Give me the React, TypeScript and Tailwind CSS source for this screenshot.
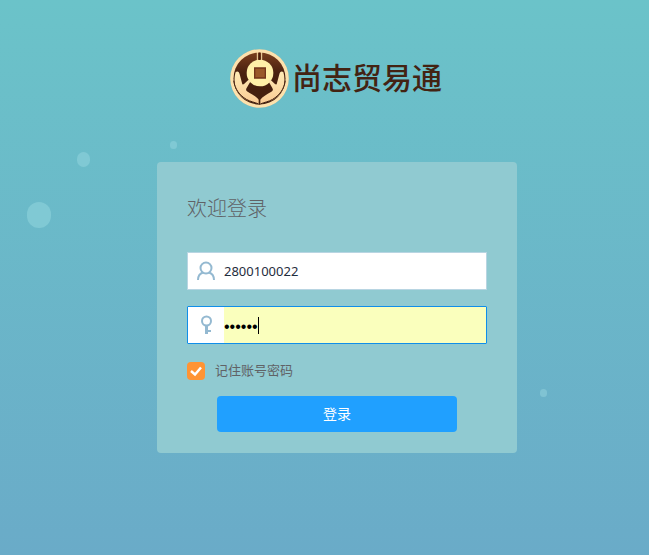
import { useState } from "react"

function Logo() {
  return (
    <svg className="h-[59px] w-[59px] shrink-0" viewBox="30 27 177 177" aria-hidden="true">
      <defs>
        <radialGradient id="gold" cx="50%" cy="50%" r="52%">
          <stop offset="0.7" stopColor="#fbd9a0" />
          <stop offset="0.94" stopColor="#fde2ae" />
          <stop offset="1" stopColor="#f3bc7c" />
        </radialGradient>
        <linearGradient id="brown" x1="0" y1="0" x2="0" y2="1">
          <stop offset="0" stopColor="#793e1e" />
          <stop offset="0.4" stopColor="#48200f" />
          <stop offset="1" stopColor="#42200f" />
        </linearGradient>
        <linearGradient id="hand" x1="0" y1="0" x2="0" y2="1">
          <stop offset="0" stopColor="#ffebb6" />
          <stop offset="1" stopColor="#f9cb94" />
        </linearGradient>
        <g id="palm">
          <path
            d="M47 96c6-4 11 0 12 7l7 26c1 5 3 6 7 2l11-10c5-3 9 1 6 6l-10 17c-3 5-2 8 3 11c15 9 26 14 33 24v14c-9-5-22-7-36-13c-16-8-26-20-33-37c-5-15-4-34 0-47z"
            fill="url(#hand)"
          />
          <path d="M41 122c4 26 18 44 38 56c12 7 26 9 37 14" fill="none" stroke="#42200f" strokeWidth="3" />
        </g>
      </defs>
      <circle cx="118.5" cy="115.5" r="88" fill="url(#gold)" />
      <circle cx="118.5" cy="115.5" r="78" fill="url(#brown)" />
      <path d="M112 36v36M125 36v36" stroke="#fde2ae" strokeWidth="3" />
      <circle cx="120" cy="99" r="40" fill="#fff0a8" />
      <path d="M118.500 60v-22" stroke="#48200f" strokeWidth="4" />
      <path d="M104 84h32v30h-32z" fill="#9a592a" stroke="#73351b" strokeWidth="4" />
      <use href="#palm" />
      <use href="#palm" transform="translate(237 0) scale(-1 1)" />
      <path d="M118.500 160v34" stroke="#42200f" strokeWidth="3" />
    </svg>
  )
}

function UserIcon() {
  return (
    <svg className="h-5 w-5" viewBox="0 0 20 20" fill="none" stroke="#94b9d1" strokeWidth="2" aria-hidden="true">
      <circle cx="10" cy="7" r="5.500" />
      <path d="M2 19c0-4 2-6.500 5-7.500M13 11.500c3 1 5 3.500 5 7.500" />
    </svg>
  )
}

function KeyIcon() {
  return (
    <svg className="h-5 w-5" viewBox="0 0 20 20" fill="none" stroke="#94b9d1" aria-hidden="true">
      <circle cx="10.500" cy="6" r="4.500" strokeWidth="2" />
      <path d="M10.500 10.500v8.500" strokeWidth="3" />
      <path d="M12 16h3" strokeWidth="2" />
    </svg>
  )
}

export default function App() {
  const [account, setAccount] = useState("2800100022")
  const [password, setPassword] = useState("123456")
  const [remember, setRemember] = useState(true)

  return (
    <div className="relative min-h-screen overflow-hidden bg-linear-to-b from-[#6bc3c9] to-[#6aabc8] pt-12 pl-[25px] font-['Noto_Sans','Noto_Sans_CJK_SC',sans-serif]">
      {/* floating bubbles */}
      <span className="absolute top-[202px] left-[27px] h-[26px] w-6 rounded-full bg-[#80c9d4]"></span>
      <span className="absolute top-[152px] left-[77px] h-[15px] w-[13px] rounded-full bg-[#80c9d4]"></span>
      <span className="absolute top-[141px] left-[170px] h-[8px] w-[7px] rounded-full bg-[#80c9d4]"></span>
      <span className="absolute top-[389px] left-[540px] h-[8px] w-[7px] rounded-full bg-[#80c3d3]"></span>

      <header className="flex h-[60px] items-center justify-center gap-[3px] pr-0.5">
        <Logo />
        <h1 className="text-[30px] leading-[60px] font-medium text-[#432313]">尚志贸易通</h1>
      </header>

      <form
        className="mx-auto mt-[54px] flex w-full max-w-[360px] flex-col rounded bg-[#90cad1] px-[30px] pt-[31px] pb-[21px]"
        onSubmit={e => e.preventDefault()}
      >
        <h2 className="text-xl leading-8 font-light text-[#606266]">欢迎登录</h2>

        <div className="mt-[27px] flex h-[38px] border border-[#b8d5e2] bg-white">
          <label htmlFor="account" aria-label="账号" className="flex w-9 items-center justify-center">
            <UserIcon />
          </label>
          <input
            id="account"
            type="text"
            value={account}
            onChange={e => setAccount(e.target.value)}
            className="min-w-0 flex-1 pt-0.5 text-[13px] text-[#1f2d3d] outline-none"
          />
        </div>

        <div className="relative mt-4 flex h-[38px] rounded-[1px] border border-[#108ee9] bg-white">
          <label htmlFor="password" aria-label="密码" className="flex w-9 items-center justify-center">
            <KeyIcon />
          </label>
          <input
            id="password"
            type="password"
            value={password}
            onChange={e => setPassword(e.target.value)}
            className="min-w-0 flex-1 bg-[#faffbd] pt-1 font-['Liberation_Sans'] text-base text-black caret-transparent outline-none"
          />
          {/* text cursor */}
          <span className="absolute top-[10px] left-[70px] h-[17px] w-px bg-black"></span>
        </div>

        <label className="mt-[17px] flex h-5 items-center gap-[10px] text-[13px] text-[#606266]">
          <span className="relative h-[18px] w-[18px]">
            <input
              type="checkbox"
              checked={remember}
              onChange={e => setRemember(e.target.checked)}
              className="peer block h-[18px] w-[18px] appearance-none rounded bg-white checked:bg-[#ff9434]"
            />
            <svg
              className="pointer-events-none absolute inset-0 hidden h-[18px] w-[18px] peer-checked:block"
              viewBox="0 0 18 18"
              fill="none"
              stroke="white"
              strokeWidth="2.500"
              aria-hidden="true"
            >
              <path d="M4 9l4 3.500l6-7" />
            </svg>
          </span>
          记住账号密码
        </label>

        <button type="submit" className="mx-[30px] mt-[15px] h-9 rounded bg-[#20a0ff] text-sm text-white">
          登录
        </button>
      </form>
    </div>
  )
}
